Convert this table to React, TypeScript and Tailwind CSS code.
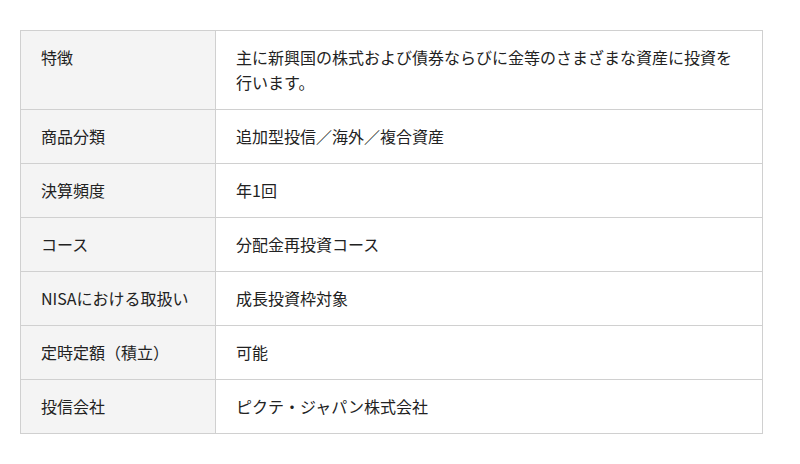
import React from "react";

const rows: [string, string][] = [
  ["特徴", "主に新興国の株式および債券ならびに金等のさまざまな資産に投資を行います。"],
  ["商品分類", "追加型投信／海外／複合資産"],
  ["決算頻度", "年1回"],
  ["コース", "分配金再投資コース"],
  ["NISAにおける取扱い", "成長投資枠対象"],
  ["定時定額（積立）", "可能"],
  ["投信会社", "ピクテ・ジャパン株式会社"],
];

export default function App() {
  return (
    <div
      className="w-[800px] h-[464px] bg-white pt-[30px] pl-[20px]"
      style={{ fontFamily: '"Noto Sans CJK JP", "Noto Sans", sans-serif' }}
    >
      <div className="w-[743px] border border-[#d0d0d0] text-[16px] leading-[25px] text-[#222]">
        {rows.map(([k, v], i) => (
          <div key={i} className={i === 0 ? "flex" : "flex border-t border-[#d0d0d0]"}>
            <div className="w-[195px] shrink-0 bg-[#f4f4f4] border-r border-[#d0d0d0] pl-[20px] pr-[16px] py-[14px]">
              {k}
            </div>
            <div className="flex-1 pl-[20px] pr-[24px] py-[14px]">{v}</div>
          </div>
        ))}
      </div>
    </div>
  );
}
